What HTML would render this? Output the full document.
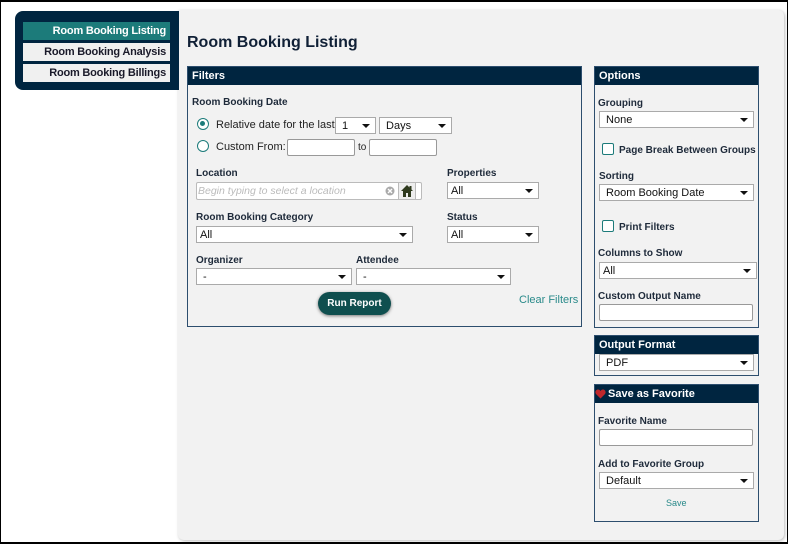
<!DOCTYPE html>
<html><head><meta charset="utf-8"><style>
*{box-sizing:border-box;margin:0;padding:0}
body{width:788px;height:544px;background:#fff;font-family:"Liberation Sans",Arial,sans-serif;position:relative;overflow:hidden;color:#222}
.frame{position:absolute;left:0;top:0;width:788px;height:544px;border:1px solid #000;border-top-width:2px;border-bottom-width:2px}
.a{position:absolute}
.main{left:178px;top:10px;width:606px;height:530px;background:#f2f2f2;border-radius:0 6px 6px 6px;box-shadow:1px 1px 3px #bbb}
.side{left:15px;top:11px;width:164px;height:79px;background:#002540;border-radius:8px 0 0 8px}
.nav{position:absolute;left:8px;width:147px;height:18px;background:#f0f0f0;font-size:11px;font-weight:bold;text-align:right;padding-right:4px;line-height:19px;color:#1a1a2a;letter-spacing:-0.2px}
.nav.on{background:#1c7b7a;color:#fff}
h1{position:absolute;left:187px;top:34px;font-size:16px;font-weight:bold;color:#102036}
.panel{position:absolute;border:1px solid #2d4e6e;background:#f2f2f2}
.hd{background:#002540;color:#fff;font-weight:bold;font-size:11px;height:18px;line-height:18px;padding-left:4px}
.lb{position:absolute;font-size:10px;font-weight:bold;color:#1e2a3a;margin-top:1px}
.tx{position:absolute;font-size:11px;color:#222;margin-top:1px}
.sel{position:absolute;height:17px;background:#fff;border:1px solid #aaa;font-size:11px;line-height:16px;padding-left:3px;color:#111}
.sel:after{content:"";position:absolute;right:5px;top:6px;border-left:4px solid transparent;border-right:4px solid transparent;border-top:4px solid #111}
.inp{position:absolute;height:17px;background:#fff;border:1px solid #999;border-radius:2px}
.rad{position:absolute;width:12px;height:12px;border:1.5px solid #1c7b7a;border-radius:50%;background:#fff}
.rad.on:after{content:"";position:absolute;left:2px;top:2px;width:5px;height:5px;border-radius:50%;background:#1c7b7a}
.chk{position:absolute;width:12px;height:12px;border:1.5px solid #1c7b7a;background:#fff;border-radius:2px}
</style></head><body>
<div class="a main"></div>
<div class="a side">
<div class="nav on" style="top:11px">Room Booking Listing</div>
<div class="nav" style="top:32px">Room Booking Analysis</div>
<div class="nav" style="top:53px">Room Booking Billings</div>
</div>
<h1>Room Booking Listing</h1>

<div class="panel" style="left:187px;top:66px;width:395px;height:261px"><div class="hd">Filters</div></div>
<div class="lb" style="left:192px;top:96px">Room Booking Date</div>
<div class="rad on" style="left:197px;top:118px"></div>
<div class="tx" style="left:216px;top:118px">Relative date for the last</div>
<div class="sel" style="left:335px;top:117px;width:41px">&nbsp;1</div>
<div class="sel" style="left:379px;top:117px;width:73px">&nbsp;Days</div>
<div class="rad" style="left:197px;top:140px"></div>
<div class="tx" style="left:216px;top:140px">Custom From:</div>
<div class="inp" style="left:287px;top:139px;width:68px"></div>
<div class="tx" style="left:358px;top:141px;font-size:10px">to</div>
<div class="inp" style="left:369px;top:139px;width:68px"></div>

<div class="lb" style="left:196px;top:167px">Location</div>
<div class="inp" style="left:196px;top:182px;width:226px;height:18px;border-color:#bbb"></div>
<div class="tx" style="left:198px;top:185px;font-size:10.5px;font-style:italic;color:#bbb;margin-top:0">Begin typing to select a location</div>
<svg class="a" style="left:385px;top:186px" width="10" height="10"><circle cx="5" cy="5" r="4.5" fill="#aaa"/><path d="M3 3L7 7M7 3L3 7" stroke="#fff" stroke-width="1.4"/></svg>
<div class="a" style="left:398px;top:182px;width:18px;height:18px;background:#eee;border:1px solid #bbb"></div>
<svg class="a" style="left:400px;top:184px" width="14" height="14"><path d="M7 1L1 7H3V13H6V9H8V13H11V7H13Z" fill="#2f3a1e"/><rect x="9.5" y="2" width="2" height="4" fill="#2f3a1e"/></svg>
<div class="lb" style="left:447px;top:167px">Properties</div>
<div class="sel" style="left:447px;top:182px;width:92px">All</div>
<div class="lb" style="left:196px;top:211px">Room Booking Category</div>
<div class="sel" style="left:196px;top:226px;width:217px">All</div>
<div class="lb" style="left:447px;top:211px">Status</div>
<div class="sel" style="left:447px;top:226px;width:92px">All</div>
<div class="lb" style="left:196px;top:254px">Organizer</div>
<div class="sel" style="left:196px;top:268px;width:156px">&nbsp;-</div>
<div class="lb" style="left:356px;top:254px">Attendee</div>
<div class="sel" style="left:356px;top:268px;width:155px">&nbsp;-</div>
<div class="a" style="left:318px;top:292px;width:73px;height:23px;border-radius:12px;background:#0f4f4f;color:#fff;font-size:10px;font-weight:bold;text-align:center;line-height:23px;box-shadow:0 1px 3px #777">Run Report</div>
<div class="tx" style="left:519px;top:293px;color:#2a8a8a;font-size:11px">Clear Filters</div>

<div class="panel" style="left:594px;top:66px;width:165px;height:262px"><div class="hd">Options</div></div>
<div class="lb" style="left:598px;top:97px">Grouping</div>
<div class="sel" style="left:599px;top:111px;width:155px">&nbsp;None</div>
<div class="chk" style="left:602px;top:143px"></div>
<div class="lb" style="left:619px;top:144px">Page Break Between Groups</div>
<div class="lb" style="left:599px;top:170px">Sorting</div>
<div class="sel" style="left:599px;top:184px;width:155px">&nbsp;Room Booking Date</div>
<div class="chk" style="left:602px;top:220px"></div>
<div class="lb" style="left:619px;top:221px">Print Filters</div>
<div class="lb" style="left:598px;top:247px">Columns to Show</div>
<div class="sel" style="left:599px;top:262px;width:158px">All</div>
<div class="lb" style="left:598px;top:290px">Custom Output Name</div>
<div class="inp" style="left:599px;top:304px;width:154px"></div>

<div class="panel" style="left:594px;top:335px;width:165px;height:41px"><div class="hd">Output Format</div></div>
<div class="sel" style="left:599px;top:354px;width:155px">&nbsp;PDF</div>

<div class="panel" style="left:594px;top:384px;width:165px;height:138px"><div class="hd" style="padding-left:13px">Save as Favorite</div></div>
<svg class="a" style="left:595px;top:389px" width="11" height="10"><path d="M5.5 9.5L1 5C-0.5 3 1 0.5 3 0.5C4.3 0.5 5 1.3 5.5 2C6 1.3 6.7 0.5 8 0.5C10 0.5 11.5 3 10 5Z" fill="#c0282c"/></svg>
<div class="lb" style="left:598px;top:415px">Favorite Name</div>
<div class="inp" style="left:599px;top:429px;width:154px"></div>
<div class="lb" style="left:598px;top:458px">Add to Favorite Group</div>
<div class="sel" style="left:599px;top:472px;width:155px">&nbsp;Default</div>
<div class="tx" style="left:666px;top:497px;font-size:9px;color:#2a8a8a">Save</div>
<div class="frame"></div>
</body></html>
